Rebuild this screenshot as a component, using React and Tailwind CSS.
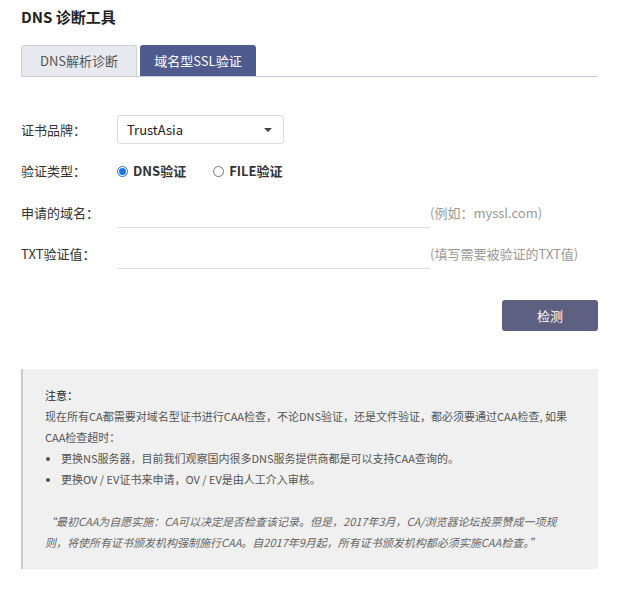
import { useState } from "react";

function Radio({ checked, label, onClick }) {
  return (
    <button type="button" onClick={onClick} className="flex items-center">
      <span
        className={`flex h-[11px] w-[11px] items-center justify-center rounded-full border ${
          checked ? "border-[#1a73e8]" : "border-[#777]"
        } bg-white`}
      >
        {checked && <span className="h-[7px] w-[7px] rounded-full bg-[#1a73e8]" />}
      </span>
      <span className="ml-[5px] text-[13px] font-bold text-[#333]">{label}</span>
    </button>
  );
}

function App() {
  const [tab, setTab] = useState(1);
  const [verify, setVerify] = useState("DNS");

  return (
    <div
      className="min-h-screen w-[621px] bg-white px-[21px] pt-[7px] text-[#333]"
      style={{ fontFamily: '"Noto Sans CJK SC", "Noto Sans", sans-serif' }}
    >
      <h1 className="text-[15px] font-bold leading-[20px] text-[#222]">DNS 诊断工具</h1>

      <div className="mt-[18px] flex w-[577px] border-b border-[#c8c8dc]">
        {["DNS解析诊断", "域名型SSL验证"].map((name, i) => (
          <button
            key={name}
            type="button"
            onClick={() => setTab(i)}
            className={`mr-[3px] h-[31px] w-[116px] rounded-t-[3px] text-[13px] leading-[30px] ${
              tab === i
                ? "bg-[#4f5b8f] text-white"
                : "border border-b-0 border-[#cfcfd8] bg-[#e8e9ef] text-[#555]"
            }`}
          >
            {name}
          </button>
        ))}
      </div>

      <div className="mt-[38px] flex items-center">
        <span className="w-[96px] text-[13px]">证书品牌：</span>
        <div className="flex h-[29px] w-[167px] items-center justify-between rounded-[3px] border border-[#dcdcdc] pl-[9px] pr-[11px]">
          <span className="text-[13px] text-[#222]">TrustAsia</span>
          <svg width="8" height="4" viewBox="0 0 8 4">
            <path d="M0 0 L8 0 L4 4 Z" fill="#444" />
          </svg>
        </div>
      </div>

      <div className="mt-[17px] flex h-[20px] items-center">
        <span className="w-[96px] text-[13px]">验证类型：</span>
        <div className="flex items-center gap-[27px]">
          <Radio checked={verify === "DNS"} label="DNS验证" onClick={() => setVerify("DNS")} />
          <Radio checked={verify === "FILE"} label="FILE验证" onClick={() => setVerify("FILE")} />
        </div>
      </div>

      <div className="mt-[17px] flex h-[30px] items-center">
        <span className="w-[96px] text-[13px]">申请的域名：</span>
        <input className="h-[30px] w-[313px] border-b border-[#dedede] text-[13px] outline-none" />
        <span className="text-[13px] text-[#999]">(例如：myssl.com)</span>
      </div>

      <div className="mt-[11px] flex h-[30px] items-center">
        <span className="w-[96px] text-[13px]">TXT验证值：</span>
        <input className="h-[30px] w-[313px] border-b border-[#dedede] text-[13px] outline-none" />
        <span className="text-[13px] text-[#999]">(填写需要被验证的TXT值)</span>
      </div>

      <div className="mt-[31px] flex w-[577px] justify-end">
        <button
          type="button"
          className="h-[31px] w-[96px] rounded-[3px] bg-[#5d6080] text-[13px] text-white"
        >
          检测
        </button>
      </div>

      <div className="mt-[38px] w-[577px] border-l-2 border-[#cccccc] bg-[#f0f0f0] pb-[16px] pl-[22px] pr-[26px] pt-[16px] text-[11px] leading-[21px] text-[#555]">
        <p className="text-[#222]">注意：</p>
        <p>
          现在所有CA都需要对域名型证书进行CAA检查，不论DNS验证，还是文件验证，都必须要通过CAA检查, 如果CAA检查超时：
        </p>
        <ul>
          {[
            "更换NS服务器，目前我们观察国内很多DNS服务提供商都是可以支持CAA查询的。",
            "更换OV / EV证书来申请，OV / EV是由人工介入审核。",
          ].map((item) => (
            <li key={item} className="flex items-center">
              <span className="ml-[1px] mr-[11px] h-[4px] w-[4px] rounded-full bg-[#555]" />
              {item}
            </li>
          ))}
        </ul>
        <p className="mt-[21px] italic text-[#666]">
          “最初CAA为自愿实施：CA可以决定是否检查该记录。但是，2017年3月，CA/浏览器论坛投票赞成一项规
          <br />
          则，将使所有证书颁发机构强制施行CAA。自2017年9月起，所有证书颁发机构都必须实施CAA检查。”
        </p>
      </div>
    </div>
  );
}

export default App;
